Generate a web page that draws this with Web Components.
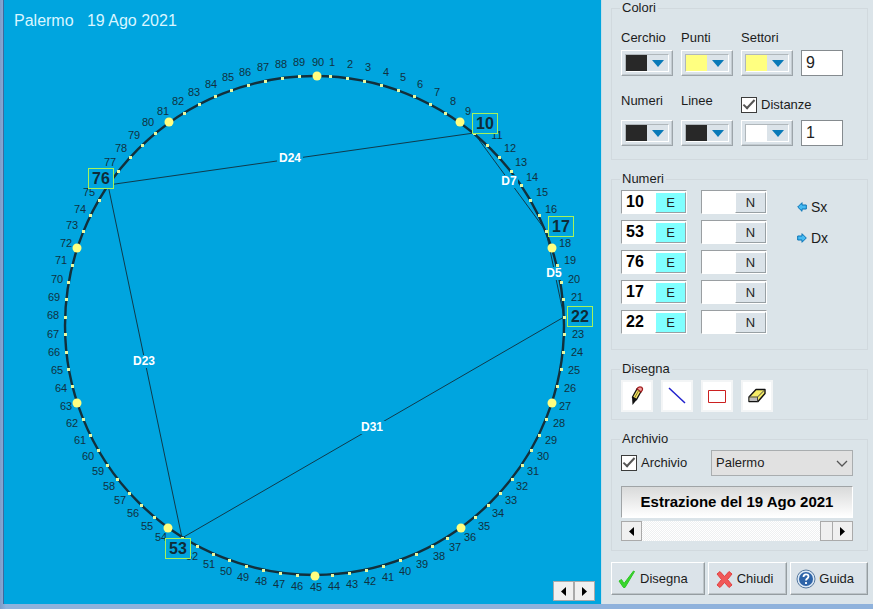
<!DOCTYPE html>
<html lang="it">
<head>
<meta charset="utf-8">
<title>Palermo 19 Ago 2021</title>
<style>
html,body{margin:0;height:100%}
body{background:#8fb2dc;font-family:"Liberation Sans",Arial,sans-serif;font-size:13px;line-height:16px;color:#1c1c1c}
</style>
</head>
<body>
<lotto-app></lotto-app>
<script>
const define=(name,html,setup)=>customElements.define(name,class extends HTMLElement{
  constructor(){
    super();
    const t=document.createElement('template');
    t.innerHTML=html;
    this.attachShadow({mode:'open'}).append(t.content.cloneNode(true));
  }
  connectedCallback(){ if(setup&&!this.ready){this.ready=true;setup(this,this.shadowRoot);} }
});

/* Circle with 90 numbered points, joined by distance chords */
define('number-wheel',`
<style>
:host{display:block;min-width:0}
svg{display:block;width:100%;height:auto}
text{font-family:"Liberation Sans",Arial,sans-serif;text-anchor:middle}
.title{font-size:16px;fill:#d9f6ff;text-anchor:start;white-space:pre}
.num{font-size:11px;fill:#10323f}
.pick{font-size:16px;font-weight:bold;fill:#0f2c38}
.dist{font-size:12px;font-weight:bold;fill:#fff}
</style>
<svg viewBox="4 0 597 603" role="img" aria-label="Cerchio dei 90 numeri"></svg>`,
(host,root)=>{
  const picks=[10,17,22,53,76], rad=Math.PI/180;
  const at=(n,cx,cy,r)=>{
    let s=n*4; if(s>180)s-=360;
    const a=(s-(s>0?.5:-.5)*Math.max(0,Math.cos(s*rad)))*rad;
    return [Math.round(cx+r*Math.sin(a)),Math.round(cy-r*Math.cos(a))];
  };
  const point=n=>at(n,314.5,325.5,250), label=n=>at(n,315.5,324.5,262.5);
  const nums=Array.from({length:90},(_,i)=>i+1);
  let s='<circle cx="314.5" cy="325.5" r="249.5" fill="none" stroke="#12303c" stroke-width="2.4"/>';
  for(const n of nums) if(!picks.includes(n)){const [x,y]=label(n);s+=`<text class="num" x="${x}" y="${y+4}">${n}</text>`;}
  const chords=[[76,10,'D24'],[10,17,'D7'],[17,22,'D5'],[22,53,'D31'],[53,76,'D23']];
  for(const [a,b] of chords){const p=point(a),q=point(b);s+=`<line x1="${p[0]}" y1="${p[1]}" x2="${q[0]}" y2="${q[1]}" stroke="#103a4a"/>`;}
  for(const n of nums){const [x,y]=point(n);s+=n%9?`<rect x="${x-1}" y="${y-1}" width="3" height="3" fill="#e8f8a0"/>`:`<circle cx="${x}" cy="${y}" r="4.5" fill="#ffff80"/>`;}
  for(const [a,b,t] of chords){
    const p=point(a),q=point(b),x=Math.round((p[0]+q[0])/2)-1,y=Math.round((p[1]+q[1])/2)-1,w=t.length*8+2;
    s+=`<rect x="${x-w/2}" y="${y-6}" width="${w}" height="13" fill="#00a5df"/><text class="dist" x="${x}" y="${y+4}">${t}</text>`;
  }
  for(const n of picks){const p=label(n),x=p[0]+2,y=p[1]+2;
    s+=`<rect x="${x-12.5}" y="${y-10.5}" width="25" height="20" fill="#00a5df" stroke="#a5f25a"/><text class="pick" x="${x}" y="${y+5}">${n}</text>`;}
  s+='<text class="title" x="14" y="26">Palermo\u00a0\u00a0\u00a019 Ago 2021</text>';
  root.querySelector('svg').innerHTML=s;
});

define('group-box',`
<style>
:host{display:block}
fieldset{margin:0;border:1px solid #d1d9de;padding:var(--pad,0 9px);min-width:0}
legend{padding:0 2px;margin:0 0 0 -1px;height:16px;line-height:16px}
</style>
<fieldset><legend></legend><slot></slot></fieldset>`,
(h,r)=>r.querySelector('legend').textContent=h.getAttribute('label'));

define('color-picker',`
<style>
:host{display:block;width:52px}
button{box-sizing:border-box;width:100%;height:26px;padding:3px;background:#dbe3e9;border:1px solid;border-color:#fff #9da5aa #9da5aa #fff;box-shadow:inset -1px -1px #c3cbd0;font:inherit}
span{box-sizing:border-box;display:flex;height:18px;border:1px solid;border-color:#b0b7bb #fff #fff #b0b7bb;align-items:stretch}
i{width:21px;background:var(--swatch)}
svg{margin:auto}
</style>
<button type="button"><span><i></i><svg width="12" height="7"><path d="M0 0h12L6 7z" fill="#0a7ab8"/></svg></span></button>`,
(h,r)=>{h.style.setProperty('--swatch',h.getAttribute('color'));r.querySelector('button').setAttribute('aria-label',h.getAttribute('label'));});

define('number-box',`
<style>
:host{display:block;width:42px}
input{box-sizing:border-box;width:100%;height:26px;border:1px solid #858b8f;background:#fff;padding:0 4px;font:16px "Liberation Sans",Arial,sans-serif;color:#222;border-radius:0}
</style>
<input type="text">`,
(h,r)=>{const i=r.querySelector('input');i.value=h.getAttribute('value');i.setAttribute('aria-label',h.getAttribute('label'));});

define('check-box',`
<style>
:host{display:block}
label{display:flex;align-items:center;gap:4px;white-space:nowrap}
input{appearance:none;box-sizing:border-box;flex:none;width:16px;height:16px;margin:0;border:1px solid #3c3c3c;background:#fff;display:grid;place-items:center}
input:checked::before{content:"";box-sizing:border-box;width:12px;height:6px;border:solid #555;border-width:0 0 2px 2px;transform:translateY(-2px) rotate(-47deg)}
</style>
<label><input type="checkbox" checked><slot></slot></label>`);

define('number-entry',`
<style>
:host{display:flex;box-sizing:border-box;width:66px;height:24px;background:#fff;border:1px solid;border-color:#9a9fa2 #fff #fff #9a9fa2}
input{box-sizing:border-box;flex:1;min-width:0;border:0;background:#fff;padding:0 0 0 4px;font:bold 16px "Liberation Sans",Arial,sans-serif;color:#000;outline:0}
button{box-sizing:border-box;width:31px;padding:0;margin:1px 0 0;border:1px solid;border-color:#fff #98a0a4 #98a0a4 #fff;background:#dbe3e9;font:13px "Liberation Sans",Arial,sans-serif;color:#222}
:host([on]) button{background:#80ffff}
</style>
<input type="text" aria-label="Numero"><button type="button"></button>`,
(h,r)=>{r.querySelector('input').value=h.getAttribute('value')||'';r.querySelector('button').textContent=h.hasAttribute('on')?'E':'N';});

define('shift-button',`
<style>
:host{display:block}
button{display:flex;align-items:center;gap:4px;border:0;background:none;padding:0;height:20px;font:inherit;font-size:14px;color:inherit}
:host([right]) path{transform:rotate(180deg);transform-origin:5px 5px}
</style>
<button type="button"><svg width="10" height="10"><path d="M.7 5 5 .7V3h4.3v4H5v2.300z" fill="#45baf2" stroke="#0873b5"/></svg><slot></slot></button>`);

define('tool-button',`
<style>
:host{display:block}
button{display:grid;place-items:center;width:32px;height:32px;padding:0;border:2px solid #f3f5f6;background:#fff}
</style>
<button type="button"><slot></slot></button>`,
(h,r)=>r.querySelector('button').setAttribute('aria-label',h.getAttribute('label')));

define('arrow-button',`
<style>
:host{display:block;width:21px;height:20px}
button{display:grid;place-items:center;width:100%;height:100%;padding:0;box-sizing:border-box;border:1px solid;border-color:var(--edge,#aaa);background:#f0f0f0}
:host([right]) svg{transform:scaleX(-1)}
</style>
<button type="button"><svg width="5" height="9"><path d="M5 0v9L0 4.500z" fill="#000"/></svg></button>`,
(h,r)=>r.querySelector('button').setAttribute('aria-label',h.hasAttribute('right')?'Avanti':'Indietro'));

define('draw-scroller',`
<style>
:host{display:flex;height:20px;background:#f5f5f5}
input{appearance:none;flex:1;min-width:0;height:20px;margin:0;background:repeating-conic-gradient(#fff 0 25%,#eef0f1 0 50%) 0 0/2px 2px}
input::-webkit-slider-thumb{appearance:none;width:12px;height:20px;box-sizing:border-box;border:1px solid #aaa;border-right:0;background:#f0f0f0}
</style>
<arrow-button></arrow-button><input type="range" min="0" max="100" value="100" aria-label="Estrazione"><arrow-button right></arrow-button>`);

define('city-select',`
<style>
:host{display:grid;align-items:center}
select,svg{grid-area:1/1}
select{appearance:none;box-sizing:border-box;width:100%;height:26px;border:1px solid #a9adaf;border-radius:0;background:#e1e1e1;padding:0 4px;font:inherit;color:inherit}
svg{justify-self:end;margin-right:5px;pointer-events:none}
</style>
<select aria-label="Ruota"><option>Palermo</option></select>
<svg width="12" height="7"><path d="M1 1l5 5 5-5" fill="none" stroke="#555" stroke-width="1.300"/></svg>`);

define('action-button',`
<style>
:host{display:block}
button{box-sizing:border-box;width:100%;height:33px;display:flex;align-items:center;justify-content:flex-start;gap:3px;padding:0 0 0 5px;border:1px solid;border-color:#fff #959da1 #959da1 #fff;box-shadow:inset -1px -1px #bcc4c8;background:#dbe3e9;font:inherit;color:inherit}
</style>
<button type="button"><slot name="icon"></slot><slot></slot></button>`);

define('control-panel',`
<style>
:host{display:flex;flex-direction:column;gap:11px;box-sizing:border-box;padding:0 5px 7px 9px;background:#dbe4e9;border-left:1px solid #c4dfea}
.row{display:flex}
.pickers{display:grid;grid-template-columns:repeat(3,52px) 42px;column-gap:8px}
.pickers>span,.pickers>check-box{height:24px;display:flex;align-items:center;white-space:nowrap}
.pickers.low{margin-top:14px}
.pickers.low>span,.pickers.low>check-box{height:30px}
.pickers.low>span{align-items:flex-start;padding-top:3px;box-sizing:border-box}
.colori{--pad:10px 9px 13px}
.numeri{--pad:3px 9px 15px}
.disegna{--pad:3px 9px 7px}
.archivio{--pad:3px 14px 9px 9px}
.entries{display:grid;grid-template-columns:66px 66px;gap:6px 14px}
.shift{display:grid;align-content:start;gap:11px;padding:7px 0 0 30px}
.tools{display:flex;gap:8px}
.city{display:grid;grid-template-columns:90px 1fr;align-items:center;margin-bottom:10px}
.draw{display:block;box-sizing:border-box;height:32px;line-height:30px;margin-bottom:3px;text-align:center;font-weight:bold;font-size:15px;white-space:nowrap;color:#000;background:linear-gradient(#d9dada,#fff);border:1px solid;border-color:#a0a4a6 #fff #fff #a0a4a6}
.actions{display:grid;grid-template-columns:94fr 80fr 78fr;gap:3px}
</style>
<group-box class="colori" label="Colori">
  <div class="pickers">
    <span>Cerchio</span><span>Punti</span><span>Settori</span><span></span>
    <color-picker color="#282828" label="Cerchio"></color-picker><color-picker color="#ffff80" label="Punti"></color-picker><color-picker color="#ffff80" label="Settori"></color-picker><number-box value="9" label="Settori"></number-box>
  </div>
  <div class="pickers low">
    <span>Numeri</span><span>Linee</span><check-box>Distanze</check-box><span></span>
    <color-picker color="#282828" label="Numeri"></color-picker><color-picker color="#282828" label="Linee"></color-picker><color-picker color="#ffffff" label="Distanze"></color-picker><number-box value="1" label="Distanze"></number-box>
  </div>
</group-box>
<group-box class="numeri" label="Numeri">
  <div class="row">
    <div class="entries">
      <number-entry value="10" on></number-entry><number-entry></number-entry>
      <number-entry value="53" on></number-entry><number-entry></number-entry>
      <number-entry value="76" on></number-entry><number-entry></number-entry>
      <number-entry value="17" on></number-entry><number-entry></number-entry>
      <number-entry value="22" on></number-entry><number-entry></number-entry>
    </div>
    <div class="shift"><shift-button>Sx</shift-button><shift-button right>Dx</shift-button></div>
  </div>
</group-box>
<group-box class="disegna" label="Disegna">
  <div class="tools">
    <tool-button label="Matita"><svg width="20" height="22" viewBox="0 0 20 22"><path d="M5.500 12 10 4l4 2.500-4.500 8z" fill="#f5e76c" stroke="#111" stroke-width="1.300"/><path d="M10 4c1-3 5-2.500 5.500-.5S14.500 6.500 14 7z" fill="#f2a0a0" stroke="#a01c1c" stroke-width="1.300"/><path d="m7.500 13 4.500-8" stroke="#8a7a20"/><path d="m5 11.500 5 3-4.500 5.500z" fill="#111"/></svg></tool-button>
    <tool-button label="Linea"><svg width="20" height="20"><path d="M2 2l16 15" stroke="#2020cc" stroke-width="1.500"/></svg></tool-button>
    <tool-button label="Rettangolo"><svg width="20" height="20"><path d="M1.500 4.500h17v12h-17z" fill="none" stroke="#cc2020"/></svg></tool-button>
    <tool-button label="Gomma"><svg width="20" height="20"><path d="m2 11 7-7.500h9v4L11 15.500H2z" fill="#f5ec66" stroke="#111" stroke-width="1.400" stroke-linejoin="round"/><path d="M2.500 11.500h8v3.500h-8z" fill="#bbb"/><path d="m2 11h8.500l7-7M10.500 11v4.500" fill="none" stroke="#444"/></svg></tool-button>
  </div>
</group-box>
<group-box class="archivio" label="Archivio">
  <div class="city"><check-box>Archivio</check-box><city-select></city-select></div>
  <output class="draw">Estrazione del 19 Ago 2021</output>
  <draw-scroller></draw-scroller>
</group-box>
<div class="actions">
  <action-button><svg slot="icon" width="20" height="20"><path d="M2 12l2.500-1.500L7 14.500 16.500 2l1 .5L8 18.500H6.500z" fill="#37d82b" stroke="#2fc425"/></svg>Disegna</action-button>
  <action-button><svg slot="icon" width="20" height="20"><path d="m3 5 3-2.500 4.500 5 4.500-5 3 2.500-4.500 5.500L18 16l-3 2.500-4.500-5-4.500 5L3 16l4.500-5.500z" fill="#f15858" stroke="#e04040"/></svg>Chiudi</action-button>
  <action-button><svg slot="icon" width="20" height="20"><circle cx="10" cy="10" r="9" fill="#dce9f6" stroke="#54779e"/><circle cx="10" cy="10" r="7" fill="#2e64a8"/><path d="M7.500 8c0-3.500 5-3.500 5-.5 0 2-2.500 2-2.500 4M10 13v2" fill="none" stroke="#fff" stroke-width="1.800"/></svg>Guida</action-button>
</div>`);

define('lotto-app',`
<style>
:host{display:grid;grid-template-columns:minmax(0,1fr) 272px;box-sizing:border-box;min-height:100vh;padding:0 0 5px 4px;background:linear-gradient(90deg,#7d9dc9,#8fb2dc 6px)}
main{position:relative;background:#00a5df;box-shadow:-1px 0 #3d6a9e}
.pager{position:absolute;right:6px;bottom:3px;display:flex}
</style>
<main><number-wheel></number-wheel><div class="pager"><arrow-button></arrow-button><arrow-button right></arrow-button></div></main>
<control-panel></control-panel>`);
</script>
</body>
</html>
